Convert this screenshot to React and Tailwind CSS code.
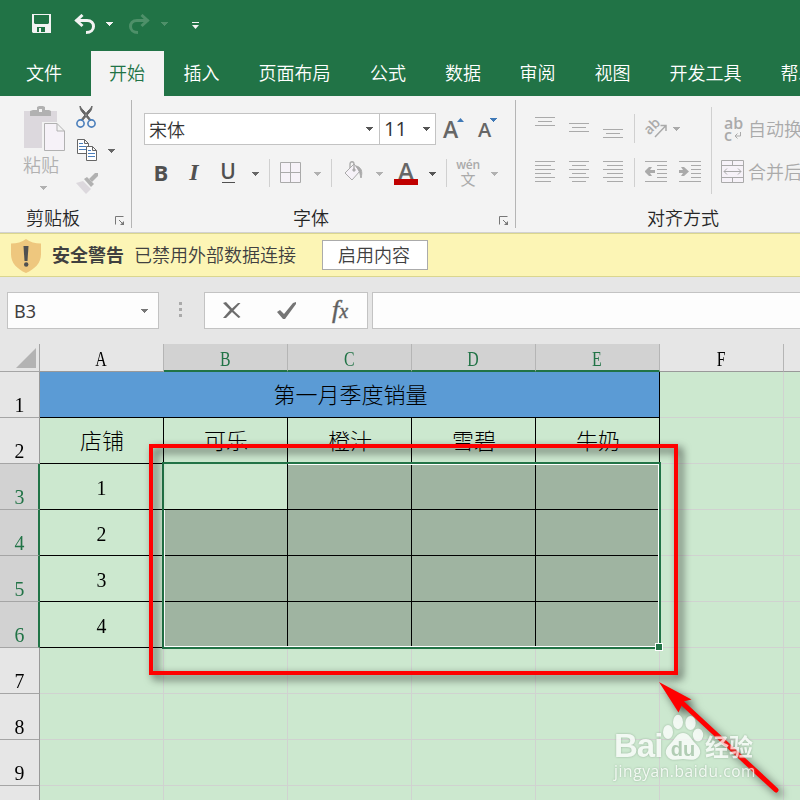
import clsx from "clsx";

const tabs = [
	{ name: "文件", width: "w-[91px] pr-[3px]" },
	{ name: "开始", width: "w-[73px] pr-px", active: true },
	{ name: "插入", width: "w-[75px]" },
	{ name: "页面布局", width: "w-[111px]" },
	{ name: "公式", width: "w-[76px]" },
	{ name: "数据", width: "w-[74px]" },
	{ name: "审阅", width: "w-[75px]" },
	{ name: "视图", width: "w-[75px]" },
	{ name: "开发工具", width: "w-[111px]" },
	{ name: "帮助", width: "w-[75px]" },
];

const columns = ["A", "B", "C", "D", "E", "F", "G"];
const headings = ["店铺", "可乐", "橙汁", "雪碧", "牛奶"];
const rows = [1, 2, 3, 4, 5, 6, 7, 8, 9, 10];

const Caret = ({ className }) => (
	<svg
		width="7"
		height="4"
		viewBox="0 0 7 4"
		shapeRendering="crispEdges"
		className={clsx("shrink-0 fill-current", className)}>
		<path d="M0 0h7L3.500 4z" />
	</svg>
);

const Launcher = ({ className }) => (
	<svg
		width="10"
		height="10"
		viewBox="0 0 10 10"
		fill="none"
		stroke="#777"
		className={clsx("shrink-0", className)}>
		<path d="M.5 8.500V.5h8M4 4l4 4" />
		<path d="M9 5v4H5z" fill="#777" stroke="none" />
	</svg>
);

const Separator = ({ className }) => (
	<div className={clsx("w-px shrink-0 bg-[#d0d0d0]", className)} />
);

/* each line is [x, y, width] */
const Lines = ({ lines, height, className }) => (
	<svg
		width="20"
		height={height}
		fill="#aaa"
		shapeRendering="crispEdges"
		className={clsx("shrink-0", className)}>
		{lines.map(([x, y, w]) => (
			<rect key={y} x={x} y={y} width={w} height="1" />
		))}
	</svg>
);

const TitleBar = () => (
	<div className="flex h-[51px] shrink-0 pl-8 text-[#f3f3f3]">
		<svg width="20" height="20" viewBox="0 0 20 20" className="mt-[14px] fill-current">
			<path
				fillRule="evenodd"
				d="M0 0h19v19H1l-1-1zM2 1v8l1 1h13l1-1V1zM5 13v5h2v-4h2v4h4v-5z"
			/>
		</svg>
		<svg
			width="24"
			height="22"
			viewBox="0 0 24 22"
			fill="none"
			stroke="currentColor"
			strokeWidth="3"
			className="ml-[21px] mt-[14px]">
			<path d="M2.500 6.500H14c4.500 0 6.500 3 6.500 6s-2.500 6-7.500 6M9.500 1l-6 5.500 6 5.500" />
		</svg>
		<Caret className="ml-[9px] mt-[22px]" />
		<svg
			width="24"
			height="22"
			viewBox="0 0 24 22"
			fill="none"
			stroke="#4e9069"
			strokeWidth="3"
			className="ml-[15px] mt-[14px]">
			<path d="M20.500 6.500H9c-4.500 0-6.500 3-6.500 6s2.500 6 7.500 6M13.500 1l6 5.500-6 5.500" />
		</svg>
		<Caret className="ml-[9px] mt-[22px] text-[#4e9069]" />
		<svg width="8" height="8" className="ml-6 mt-[22px] fill-current">
			<path d="M0 0h7v1H0zM0 3h7L3.500 7z" />
		</svg>
	</div>
);

const TabRow = () => (
	<div className="flex h-[45px] shrink-0 text-white">
		{tabs.map((tab) => (
			<div
				key={tab.name}
				className={clsx(
					"flex shrink-0 items-center justify-center whitespace-nowrap pb-[3px]",
					tab.width,
					tab.active && "bg-[#f3f3f3] text-[#217346]"
				)}>
				{tab.name}
			</div>
		))}
	</div>
);

const ClipboardGroup = () => (
	<div className="flex h-[136px] w-[131px] shrink-0 flex-col">
		<div className="flex h-[107px] pt-[10px]">
			<div className="ml-[23px] flex w-[42px] flex-col text-[#b1b1b1]">
				<svg width="42" height="46" viewBox="0 0 42 46" className="shrink-0">
					<path d="M1 5h33v37H1z" fill="#dcd8dd" />
					<path d="M7 10V5l3-1h4V1l2-1h4l2 1v3h4l2 1v5z" fill="#b1b1b1" />
					<path d="M16 3h3v3h-3z" fill="#f3f3f3" />
					<path d="M19 16h17v28H19z" fill="#f3f3f3" />
					<path
						d="M21.500 17.500h12.500l7.500 7.500v19.500h-20zM34 17.500v7.500h7.500"
						fill="#f6f2f8"
						stroke="#b1b1b1"
					/>
				</svg>
				<div className="h-[27px] whitespace-nowrap leading-[24px]">粘贴</div>
				<Caret className="ml-[17px] mt-[7px]" />
			</div>
			<div className="ml-[11px] flex w-[22px] flex-col">
				<svg width="20" height="22" viewBox="0 0 20 22" fill="none" className="shrink-0">
					<path
						d="M4 0c0 3 1 5 3 7l7 8 1-1L8 5C6 3 5 2 4 0zM16 0c0 3-1 5-3 7l-7 8-1-1 7-9c2-2 3-3 4-5z"
						fill="#666"
						stroke="#666"
					/>
					<circle cx="4.500" cy="17.500" r="3.600" stroke="#4a7ebb" strokeWidth="1.600" />
					<circle cx="15.500" cy="17.500" r="3.600" stroke="#4a7ebb" strokeWidth="1.600" />
				</svg>
				<svg
					width="21"
					height="23"
					viewBox="0 0 21 23"
					fill="#fff"
					stroke="#666"
					className="ml-px mt-[11px] shrink-0">
					<path d="M.5.5h7l4 4v10H.5zM7.500.5v4h4" />
					<path d="M2 4.500h4M2 7.500h7M2 10.500h7" stroke="#4a7ebb" />
					<path d="M9.500 7.500h6l4 4v10h-10zM15.500 7.500v4h4" />
					<path d="M11 11.500h3M11 14.500h7M11 17.500h7" stroke="#4a7ebb" />
				</svg>
				<svg width="22" height="21" viewBox="0 0 22 21" className="mt-[11px] shrink-0">
					<path d="M0 10l7-2 8 8-5 5z" fill="#dcd8dd" />
					<path d="M8 6l3-2 7 7-3 3z" fill="#b1b1b1" />
					<path d="M13 6l6-6 3 0v3l-6 6z" fill="#b1b1b1" />
				</svg>
			</div>
			<Caret className="ml-[10px] mt-[43px] text-[#666]" />
		</div>
		<div className="flex h-[29px] text-[#262626]">
			<div className="ml-[26px] w-[89px] leading-[29px]">剪贴板</div>
			<Launcher className="mt-[13px]" />
		</div>
	</div>
);

const FontGroup = () => (
	<div className="flex h-[136px] w-[383px] shrink-0 flex-col">
		<div className="ml-3 mt-[17px] flex h-8 text-[#666]">
			<div className="flex w-[236px] items-center border border-[#c3c3c3] bg-white pl-1 pr-[6px] text-[#333]">
				<span className="grow">宋体</span>
				<Caret className="text-[#555]" />
			</div>
			<div className="-ml-px flex w-[57px] items-center border border-[#c3c3c3] bg-white pl-1 pr-[5px] font-['Open_Sans',sans-serif] text-[20px] font-normal text-[#333]">
				<span className="grow">11</span>
				<Caret className="text-[#555]" />
			</div>
			<div className="ml-[7px] flex font-['Open_Sans',sans-serif] font-semibold">
				<span className="w-[14px] text-[23px] leading-[32px]">A</span>
				<svg width="7" height="4" className="mt-[5px] fill-[#3f79b7]">
					<path d="M0 4h7L3.500 0z" />
				</svg>
			</div>
			<div className="ml-[14px] flex font-['Open_Sans',sans-serif] font-semibold">
				<span className="w-3 text-[20px] leading-[34px]">A</span>
				<Caret className="mt-[5px] text-[#3f79b7]" />
			</div>
		</div>
		<div className="ml-3 mt-3 flex h-8 items-center text-[#b1b1b1]">
			<span className="ml-[9px] h-8 w-4 text-center font-['Open_Sans',sans-serif] text-[22px] font-bold leading-[30px] text-[#505050]">
				B
			</span>
			<span className="ml-[17px] h-8 w-4 text-center font-['Liberation_Serif',serif] text-[24px] font-bold italic leading-[30px] text-[#505050]">
				I
			</span>
			<span className="ml-[18px] flex h-8 w-4 flex-col items-center font-['Open_Sans',sans-serif] text-[21px] font-semibold leading-[29px] text-[#505050]">
				<span className="h-[25px]">U</span>
				<span className="h-px w-[13px] shrink-0 bg-[#505050]" />
			</span>
			<Caret className="ml-4 mt-[2px] text-[#666]" />
			<Separator className="ml-[10px] h-7" />
			<svg width="21" height="21" viewBox="0 0 21 21" className="mb-px ml-[10px] shrink-0" fill="#f6f2f8" stroke="#aaa">
				<path d="M.5.5h20v20H.5zM10.500.5v20M.5 10.500h20" />
			</svg>
			<Caret className="ml-[13px] mt-[2px]" />
			<Separator className="ml-[10px] h-7" />
			<svg width="20" height="21" viewBox="0 0 20 21" fill="none" stroke="#aaa" className="mb-1 ml-3 shrink-0">
				<path d="M1 12l9-9 6 7-8 9z" fill="#f6f2f8" />
				<path d="M6 7V3c0-3 4-3 4 0v6" strokeWidth="1.300" />
				<circle cx="10" cy="9" r="1.200" fill="#aaa" />
				<path d="M12 5c5 1 7 5 5 12-1-4-1-5-2-7z" fill="#aaa" />
			</svg>
			<Caret className="ml-3 mt-[2px]" />
			<span className="ml-[11px] flex h-8 w-6 flex-col items-center font-['Open_Sans',sans-serif] text-[24px] font-semibold leading-[28px] text-[#666]">
				<span className="h-[22px]">A</span>
				<span className="h-[6px] w-6 shrink-0 bg-[#c00000]" />
			</span>
			<Caret className="ml-[11px] mt-[2px] text-[#555]" />
			<Separator className="ml-[10px] h-7" />
			<span className="ml-[10px] flex h-8 w-[22px] flex-col items-center font-normal text-[#aaa]">
				<span className="h-[15px] font-['Open_Sans',sans-serif] text-[12px] font-semibold leading-[15px] tracking-[-.3px]">wén</span>
				<span className="text-[15px] leading-[13px]">文</span>
			</span>
			<Caret className="ml-3 mt-[2px]" />
		</div>
		<div className="mt-[14px] flex h-[29px] text-[#262626]">
			<div className="ml-[161px] w-[206px] leading-[29px]">字体</div>
			<Launcher className="mt-[13px]" />
		</div>
	</div>
);

const Indent = ({ right }) => (
	<svg width="23" height="22" viewBox="0 0 23 22" fill="#aaa" className="shrink-0">
		<path d="M0 0h22v1H0zM12 4h10v1H12zM12 8h10v1H12zM12 12h10v1H12zM12 16h10v1H12zM0 20h22v1H0z" />
		{right ? (
			<path d="M0 9h4L2 6h3l5 4.500-5 4.500H2l2-3H0z" />
		) : (
			<path d="M10 9H5l2-3H4l-4.500 4.500L4 15h3l-2-3h5z" />
		)}
	</svg>
);

const AlignGroup = () => (
	<div className="flex h-[136px] w-[284px] shrink-0 flex-col text-[#aaa]">
		<div className="flex h-[107px]">
			<div className="w-[195px] shrink-0">
				<div className="mt-[17px] flex h-8 items-start">
					<Lines className="ml-[19px] mt-1" height={10} lines={[[0, 0, 20], [3, 4, 14], [0, 8, 20]]} />
					<Lines className="ml-[14px] mt-[10px]" height={10} lines={[[0, 0, 20], [3, 4, 14], [0, 8, 20]]} />
					<Lines className="ml-[14px] mt-4" height={10} lines={[[0, 0, 20], [3, 4, 14], [0, 8, 20]]} />
					<Separator className="ml-[11px] mt-[1px] h-[29px]" />
					<div className="ml-[11px] mt-[2px] flex h-[24px] w-[22px] shrink-0">
						<svg
							width="22"
							height="24"
							viewBox="0 0 22 24"
							fill="none"
							stroke="#aaa"
							strokeWidth="1.500"
							className="overflow-visible">
							<text
								x="1"
								y="19"
								transform="rotate(-45 4 17)"
								fill="#aaa"
								stroke="none"
								className="font-['Open_Sans',sans-serif] text-[14px] font-semibold">
								ab
							</text>
							<path d="M9 22L19.500 11M14.500 10.500h5.500V16" />
						</svg>
					</div>
					<Caret className="ml-[5px] mt-[14px]" />
				</div>
				<div className="mt-3 flex h-8 items-start">
					<Lines className="ml-[19px] mt-1" height={21} lines={[[0, 0, 20], [0, 4, 16], [0, 8, 20], [0, 12, 16], [0, 16, 20], [0, 20, 16]]} />
					<Lines className="ml-[14px] mt-1" height={21} lines={[[0, 0, 20], [3, 4, 14], [0, 8, 20], [3, 12, 14], [0, 16, 20], [3, 20, 14]]} />
					<Lines className="ml-[14px] mt-1" height={21} lines={[[0, 0, 20], [4, 4, 16], [0, 8, 20], [4, 12, 16], [0, 16, 20], [4, 20, 16]]} />
					<Separator className="ml-[11px] mt-[1px] h-[29px]" />
					<div className="ml-[10px] mt-1 flex gap-[11px]">
						<Indent />
						<Indent right />
					</div>
				</div>
			</div>
			<Separator className="mt-[11px] h-[87px]" />
			<div className="whitespace-nowrap">
				<div className="mt-[17px] flex h-8 items-center">
					<div className="ml-3 h-[32px] w-[26px] font-['Open_Sans',sans-serif] text-[16px] font-semibold leading-[12px]">
						<div className="mt-[4px]">ab</div>
						<div className="flex">
							c
							<svg width="8" height="8" fill="none" stroke="#aaa" className="ml-[2px] mt-[3px]">
								<path d="M6.500 0v4H1M3.500 1.500L1 4l2.500 2.500" />
							</svg>
						</div>
					</div>
					<span className="ml-[-2px] pb-[2px]">自动换行</span>
				</div>
				<div className="mt-3 flex h-8 items-center">
					<svg width="23" height="23" viewBox="0 0 23 23" fill="#f6f2f8" stroke="#aaa" className="mb-[3px] ml-[9px]">
						<path d="M.5.5h22v22H.5zM.5 5.500h22M.5 17.500h22M11.500.5v5M11.500 17.500v5" />
						<path d="M3 11.500h17M6 8.500l-3 3 3 3M17 8.500l3 3-3 3" fill="none" />
					</svg>
					<span className="ml-1 pb-[3px]">合并后居中</span>
				</div>
			</div>
		</div>
		<div className="ml-[131px] h-[29px] leading-[29px] text-[#262626]">对齐方式</div>
	</div>
);

const WarningBar = () => (
	<div className="flex h-[44px] shrink-0 items-center border-y border-[#dad68f] bg-[#fcf5b5] text-[#404040]">
		<svg width="30" height="34" viewBox="0 0 30 34" className="ml-[11px] mt-[2px] shrink-0">
			<path d="M15 0c4 3 9 4.500 15 4.500V15c0 9-6 15-15 19C6 30 0 24 0 15V4.500C6 4.500 11 3 15 0z" fill="#eec77e" />
			<path d="M12.500 7h5l-1 15h-3z" fill="#505050" />
			<circle cx="15.200" cy="25.500" r="2.200" fill="#505050" />
		</svg>
		<span className="ml-[11px] w-[73px] pb-[2px] font-bold">安全警告</span>
		<span className="ml-[9px] w-[164px] pb-[2px]">已禁用外部数据连接</span>
		<div className="ml-6 flex h-[30px] w-[106px] items-center justify-center border border-[#ababab] bg-white pb-[2px] pr-[2px]">
			启用内容
		</div>
	</div>
);

const FormulaBar = () => (
	<div className="flex h-[67px] shrink-0 pt-[15px]">
		<div className="ml-[7px] flex h-[37px] w-[152px] items-center border border-[#c3c3c3] bg-[#fdfdfd] pl-[6px] pr-[10px] text-[#404040]">
			<span className="grow pt-px font-['Noto_Sans',sans-serif] text-[18px] font-normal">B3</span>
			<Caret className="text-[#777]" />
		</div>
		<div className="ml-[20px] mt-[10px] flex w-[3px] flex-col gap-[3px]">
			<span className="h-[3px] bg-[#aaa]" />
			<span className="h-[3px] bg-[#aaa]" />
			<span className="h-[3px] bg-[#aaa]" />
		</div>
		<div className="ml-[22px] flex h-[37px] w-[164px] items-center border border-[#c3c3c3] bg-[#fdfdfd]">
			<svg width="18" height="17" viewBox="0 0 18 17" className="ml-[18px] fill-[#6d6d6d]">
				<path d="M0 1l3-1 6 6.500L15 1l2.500 0-7 7.500 7 6.500-2 1L9 10l-6 6-3 0 7-8z" />
			</svg>
			<svg width="20" height="17" viewBox="0 0 20 17" className="ml-[36px] fill-[#757575]">
				<path d="M0 10l3-2 4 4 9-11 3-1v2L8 17H6z" />
			</svg>
			<span className="ml-[35px] w-6 pb-px font-['Liberation_Serif',serif] text-[26px] italic leading-8 text-[#5d5d5d] [-webkit-text-stroke:.5px_#6d6d6d]">
				f<span className="text-[20px]">x</span>
			</span>
		</div>
		<div className="ml-1 h-[37px] grow border border-r-0 border-[#c3c3c3] bg-[#fdfdfd]" />
	</div>
);

const Sheet = () => (
	<div className="relative grid w-[908px] shrink-0 grid-cols-[40px_repeat(7,124px)] grid-rows-[28px_repeat(10,46px)] bg-[#cce8cf] font-['Liberation_Serif','Noto_Sans_CJK_SC',serif] text-[22px] text-black">
		<div className="flex justify-end border-b border-r border-[#a5a5a5] bg-[#e6e6e6]">
			<svg width="20" height="20" className="mr-[3px] mt-[4px] fill-[#b3b3b3]">
				<path d="M20 0v20H0z" />
			</svg>
		</div>
		{columns.map((col, i) => {
			const selected = i > 0 && i < 5;
			return (
				<div
					key={col}
					className={clsx(
						"flex justify-center border-r border-r-[#b5b5b5] pr-px leading-[30px]",
						selected
							? "border-b-2 border-b-[#217346] bg-[#d2d2d2] text-[#217346]"
							: "border-b border-b-[#999] bg-[#e6e6e6]"
					)}>
					<span className="scale-x-[.72]">{col}</span>
				</div>
			);
		})}
		{rows.map((row) => (
			<Row key={row} row={row} />
		))}
		{/* selection frame */}
		<div className="absolute left-[162px] top-[118px] h-[187px] w-[499px] border-2 border-[#217346]" />
		<div className="absolute left-[288px] top-[120px] h-px w-[371px] bg-white" />
		<div className="absolute left-[164px] top-[166px] h-[137px] w-px bg-white" />
		<div className="absolute left-[658px] top-[120px] h-[183px] w-px bg-white" />
		<div className="absolute left-[164px] top-[302px] h-px w-[494px] bg-white" />
		<div className="absolute left-[655px] top-[299px] size-2 border border-white bg-[#217346]" />
	</div>
);

const Row = ({ row }) => {
	const active = row > 2 && row < 7;
	return (
		<>
			<div
				className={clsx(
					"flex items-end justify-center border-b border-b-[#a5a5a5] pb-px",
					active
						? "border-r-2 border-r-[#217346] bg-[#d2d2d2] pl-px text-[#217346]"
						: "border-r border-r-[#999] bg-[#e6e6e6]"
				)}>
				<span className="scale-x-90 leading-[22px]">{row}</span>
			</div>
			{row === 1 && (
				<div className="col-span-5 flex items-center justify-center border-b border-r border-black bg-[#5b9bd5] pl-[2px] pt-px font-light">
					第一月季度销量
				</div>
			)}
			{columns.map((col, i) => {
				if (row === 1 && i < 5) return null;
				const inTable = row < 7 && i < 5;
				const shaded = active && i > 0 && i < 5 && !(row === 3 && i === 1);
				return (
					<div
						key={col}
						className={clsx(
							"flex items-center justify-center border-b border-r pt-[2px] font-light",
							row === 2 && "pl-px",
							inTable ? "border-black" : "border-[#d0d2d0]",
							shaded && "bg-[#9fb4a1]"
						)}>
						{row === 2 && headings[i]}
						{active && i === 0 && <span className="scale-x-90 pr-px">{row - 2}</span>}
					</div>
				);
			})}
		</>
	);
};

const Watermark = () => (
	<div className="absolute left-[614px] top-[712px] w-[145px] text-white opacity-75 [filter:drop-shadow(0_0_1px_#8aa58d)]">
		<div className="flex h-[50px] items-end">
			<span className="w-[49px] font-['Liberation_Sans',sans-serif] text-[33px] font-bold leading-[33px] tracking-[-1px]">
				Bai
			</span>
			<svg width="42" height="48" viewBox="0 0 42 48" className="shrink-0 fill-current">
				<ellipse cx="5" cy="18" rx="5" ry="7" />
				<ellipse cx="15" cy="8" rx="5" ry="7.200" />
				<ellipse cx="27.500" cy="9" rx="5.200" ry="7" />
				<ellipse cx="35" cy="21" rx="5.200" ry="6.500" />
				<path d="M20 19c6 0 8 6 12 10s7 8 4 13-9 4-16 3c-7 1-13 2-16-3s0-9 4-13 6-10 12-10z" />
				<text
					x="20"
					y="42"
					textAnchor="middle"
					fill="#a9c4ac"
					className="font-['Liberation_Sans',sans-serif] text-[20px] font-bold">
					du
				</text>
			</svg>
			<span className="whitespace-nowrap text-[24px] font-bold leading-[32px]">经验</span>
		</div>
		<div className="whitespace-nowrap font-['Open_Sans',sans-serif] text-[15.500px] font-normal leading-[19px] tracking-[.6px]">
			jingyan.baidu.com
		</div>
	</div>
);

export default function App() {
	return (
		<div className="relative flex h-[800px] w-[800px] flex-col overflow-hidden bg-[#e6e6e6] font-['Noto_Sans_CJK_SC',sans-serif] text-[18px] font-[350]">
			<div className="flex shrink-0 flex-col bg-[#217346]">
				<TitleBar />
				<TabRow />
			</div>
			<div className="flex h-[137px] shrink-0 border-b border-[#d2d2d2] bg-[#f3f3f3]">
				<ClipboardGroup />
				<div className="mt-1 h-32 w-px shrink-0 bg-[#b5b5b5]" />
				<FontGroup />
				<div className="mt-1 h-32 w-px shrink-0 bg-[#b5b5b5]" />
				<AlignGroup />
			</div>
			<WarningBar />
			<FormulaBar />
			<Sheet />

			{/* highlight box and pointer */}
			<div className="absolute left-[149px] top-[444px] h-[231px] w-[529px] border-4 border-[#f00] [filter:drop-shadow(4px_4px_4px_rgba(0,0,0,.7))]" />
			<svg
				width="140"
				height="130"
				viewBox="0 0 140 130"
				className="absolute left-[655px] top-[678px] fill-[#f00] [filter:drop-shadow(4px_4px_4px_rgba(0,0,0,.6))]">
				<path d="M4 4l32.500 17.500-8 2-5 11z" />
				<path d="M24 22L121 112" stroke="#f00" strokeWidth="5" strokeLinecap="round" />
			</svg>
			<Watermark />
		</div>
	);
}
